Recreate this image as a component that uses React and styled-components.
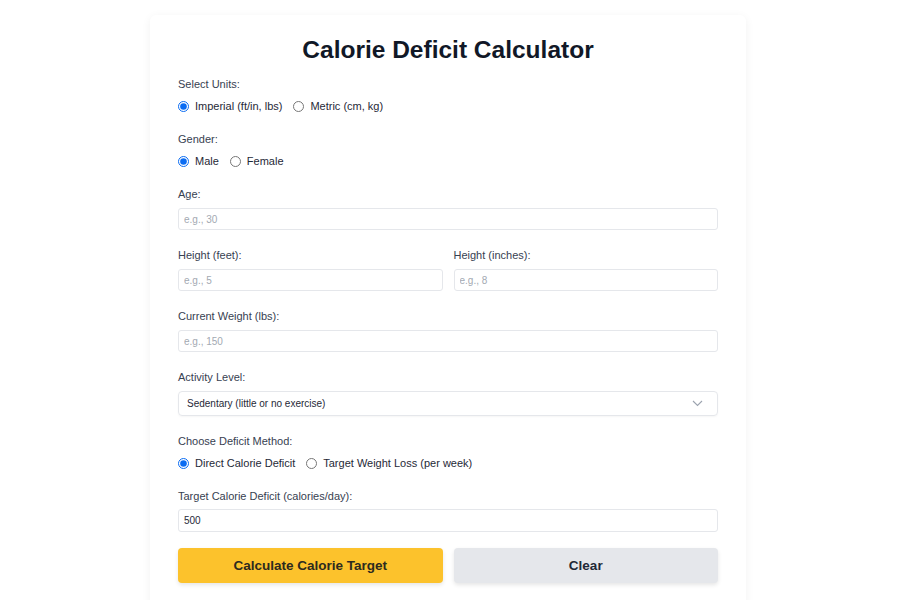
import styled, { createGlobalStyle } from "styled-components";

const GlobalStyle = createGlobalStyle`
  body {
    margin: 0;
    background: #ffffff;
    font-family: "Liberation Sans", Arial, sans-serif;
  }
`;

const Page = styled.div`
  padding: 15px 4px 0 0;
`;

const Card = styled.div`
  width: 596px;
  box-sizing: border-box;
  margin: 0 auto;
  padding: 20px 28px 30px;
  background: #ffffff;
  border-radius: 6px;
  box-shadow: 0 2px 10px rgba(0, 0, 0, 0.06);
`;

const Title = styled.h1`
  margin: 0 0 12px;
  font-size: 24.5px;
  line-height: 30px;
  font-weight: 700;
  color: #111827;
  text-align: center;
`;

const Field = styled.div`
  margin-bottom: ${(p) => (p.$last ? "16px" : "18px")};
`;

const Label = styled.div`
  font-size: 11px;
  line-height: 15px;
  color: #374151;
  margin-bottom: ${(p) => (p.$tight ? "5px" : "6px")};
`;

const RadioRow = styled.div`
  display: flex;
  align-items: center;
  gap: 11px;
  height: 16px;
`;

const RadioOption = styled.label`
  display: flex;
  align-items: center;
  gap: 6px;
  font-size: 11px;
  color: #1f2937;

  input {
    margin: 0;
    width: 11px;
    height: 11px;
    accent-color: #0b6cf2;
  }
`;

const Input = styled.input`
  display: block;
  width: 100%;
  box-sizing: border-box;
  height: ${(p) => p.$h || "22px"};
  padding: 0 5px;
  border: 1px solid #e5e7eb;
  border-radius: 3px;
  font-family: inherit;
  font-size: 10px;
  color: #1f2937;
  background: #fff;
  outline: none;

  &::placeholder {
    color: #a3a9b2;
  }
`;

const Row = styled.div`
  display: grid;
  grid-template-columns: 1fr 1fr;
  gap: 11px;
`;

const SelectBox = styled.div`
  height: 25px;
  box-sizing: border-box;
  border: 1px solid #e5e7eb;
  border-radius: 4px;
  box-shadow: 0 1px 2px rgba(0, 0, 0, 0.04);
  display: flex;
  align-items: center;
  justify-content: space-between;
  padding: 0 14px 0 8px;
  font-size: 10px;
  color: #1f2937;
`;

const Buttons = styled.div`
  display: grid;
  grid-template-columns: 1fr 1fr;
  gap: 11px;
`;

const Button = styled.button`
  height: 35px;
  border: none;
  border-radius: 4px;
  font-family: inherit;
  font-size: 13.5px;
  font-weight: 700;
  color: ${(p) => (p.$primary ? "#2d2a1f" : "#1f2937")};
  background: ${(p) => (p.$primary ? "#fcc22c" : "#e5e7eb")};
  box-shadow: 0 2px 4px rgba(0, 0, 0, 0.1);
  cursor: pointer;
`;

function Radio({ name, label, checked }) {
  return (
    <RadioOption>
      <input type="radio" name={name} defaultChecked={checked} />
      {label}
    </RadioOption>
  );
}

export default function App() {
  return (
    <Page>
      <GlobalStyle />
      <Card>
        <Title>Calorie Deficit Calculator</Title>

        <Field>
          <Label>Select Units:</Label>
          <RadioRow>
            <Radio name="units" label="Imperial (ft/in, lbs)" checked />
            <Radio name="units" label="Metric (cm, kg)" />
          </RadioRow>
        </Field>

        <Field>
          <Label>Gender:</Label>
          <RadioRow>
            <Radio name="gender" label="Male" checked />
            <Radio name="gender" label="Female" />
          </RadioRow>
        </Field>

        <Field>
          <Label>Age:</Label>
          <Input placeholder="e.g., 30" />
        </Field>

        <Row>
          <Field>
            <Label>Height (feet):</Label>
            <Input placeholder="e.g., 5" />
          </Field>
          <Field>
            <Label>Height (inches):</Label>
            <Input placeholder="e.g., 8" />
          </Field>
        </Row>

        <Field>
          <Label>Current Weight (lbs):</Label>
          <Input placeholder="e.g., 150" />
        </Field>

        <Field>
          <Label>Activity Level:</Label>
          <SelectBox>
            <span>Sedentary (little or no exercise)</span>
            <svg width="11" height="7" viewBox="0 0 11 7" fill="none">
              <path d="M1 1l4.5 4.5L10 1" stroke="#9ca3af" strokeWidth="1.1" />
            </svg>
          </SelectBox>
        </Field>

        <Field>
          <Label>Choose Deficit Method:</Label>
          <RadioRow>
            <Radio name="method" label="Direct Calorie Deficit" checked />
            <Radio name="method" label="Target Weight Loss (per week)" />
          </RadioRow>
        </Field>

        <Field $last>
          <Label $tight>Target Calorie Deficit (calories/day):</Label>
          <Input $h="23px" defaultValue="500" />
        </Field>

        <Buttons>
          <Button $primary>Calculate Calorie Target</Button>
          <Button>Clear</Button>
        </Buttons>
      </Card>
    </Page>
  );
}
